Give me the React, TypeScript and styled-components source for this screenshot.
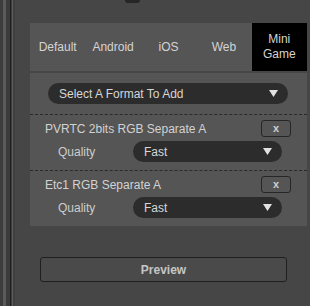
import React from "react";
import styled, { createGlobalStyle } from "styled-components";

const GlobalStyle = createGlobalStyle`
  html, body { margin: 0; padding: 0; }
  body {
    background: #464646;
    font-family: "Liberation Sans", Arial, sans-serif;
    font-size: 12px;
    color: #d2d2d2;
    width: 310px;
    height: 306px;
    overflow: hidden;
  }
`;

const Frame = styled.div`
  display: flex;
  width: 310px;
  height: 306px;
`;

const Stripes = styled.div`
  width: 15px;
  flex: none;
  background: linear-gradient(
    to right,
    #3c3c3c 0 3px,
    #5a5a5a 3px 6px,
    #3b3b3b 6px 10px,
    #1e1e1e 10px 11px,
    #3c3c3c 11px 12px,
    #5c5c5c 12px 13px,
    #404040 13px 15px
  );
`;

const Main = styled.div`
  flex: 1;
  display: flex;
  flex-direction: column;
`;

const TopStub = styled.div`
  width: 15px;
  height: 3px;
  margin-left: 110px;
  background: #262626;
  border-radius: 0 0 4px 4px;
`;

const Panel = styled.div`
  margin: 20px 0 0 15px;
  width: 277px;
  display: flex;
  flex-direction: column;
  gap: 2px;
`;

const TabBar = styled.div`
  display: grid;
  grid-template-columns: repeat(5, 1fr);
  height: 48px;
  background: #555555;
`;

const Tab = styled.div<{ $active?: boolean }>`
  display: flex;
  align-items: center;
  justify-content: center;
  text-align: center;
  line-height: 15px;
  color: #d4d4d4;
  background: ${(p) => (p.$active ? "#000000" : "transparent")};
`;

const Body = styled.div`
  background: #555555;
  padding-top: 10px;
`;

const Dropdown = styled.div<{ $width: number }>`
  display: flex;
  align-items: center;
  justify-content: space-between;
  box-sizing: border-box;
  width: ${(p) => p.$width}px;
  height: 21px;
  padding: 0 10px 0 11px;
  border-radius: 11px;
  background: #2c2c2c;
  color: #d6d6d6;
  font-size: 12px;
`;

const AddSelect = styled(Dropdown)`
  margin: 0 0 10px 18px;
`;

const Arrow = () => (
  <svg width="9" height="7" viewBox="0 0 9 7">
    <polygon points="0,0 9,0 4.5,7" fill="#e2e2e2" />
  </svg>
);

const Format = styled.div`
  border-top: 1px dashed #2a2a2a;
  padding: 5px 0 8px 0;
  display: flex;
  flex-direction: column;
  gap: 4px;
`;

const Header = styled.div`
  display: flex;
  align-items: center;
  justify-content: space-between;
  height: 17px;
  padding: 0 16px 0 15px;
`;

const Title = styled.span`
  color: #d2d2d2;
`;

const RemoveButton = styled.div`
  box-sizing: border-box;
  width: 30px;
  height: 17px;
  border: 1px solid #262626;
  border-radius: 3px;
  display: flex;
  align-items: center;
  justify-content: center;
  font-weight: bold;
  font-size: 11px;
  color: #cfcfcf;
  padding-bottom: 1px;
`;

const QualityRow = styled.div`
  display: flex;
  align-items: center;
  height: 21px;
  padding-left: 28px;
`;

const Label = styled.span`
  width: 75px;
  color: #cdcdcd;
`;

const PreviewButton = styled.div`
  box-sizing: border-box;
  margin: 31px 0 0 25px;
  width: 247px;
  height: 25px;
  border: 1px solid #1f1f1f;
  border-radius: 3px;
  background: #4a4a4a;
  display: flex;
  align-items: center;
  justify-content: center;
  font-weight: bold;
  color: #c6c6c6;
`;

const formats = ["PVRTC 2bits RGB Separate A", "Etc1 RGB Separate A"];

export default function App() {
  return (
    <>
      <GlobalStyle />
      <Frame>
        <Stripes />
        <Main>
          <TopStub />
          <Panel>
            <TabBar>
              <Tab>Default</Tab>
              <Tab>Android</Tab>
              <Tab>iOS</Tab>
              <Tab>Web</Tab>
              <Tab $active>
                Mini
                <br />
                Game
              </Tab>
            </TabBar>
            <Body>
              <AddSelect $width={240}>
                <span>Select A Format To Add</span>
                <Arrow />
              </AddSelect>
              {formats.map((f) => (
                <Format key={f}>
                  <Header>
                    <Title>{f}</Title>
                    <RemoveButton>x</RemoveButton>
                  </Header>
                  <QualityRow>
                    <Label>Quality</Label>
                    <Dropdown $width={149}>
                      <span>Fast</span>
                      <Arrow />
                    </Dropdown>
                  </QualityRow>
                </Format>
              ))}
            </Body>
          </Panel>
          <PreviewButton>Preview</PreviewButton>
        </Main>
      </Frame>
    </>
  );
}
